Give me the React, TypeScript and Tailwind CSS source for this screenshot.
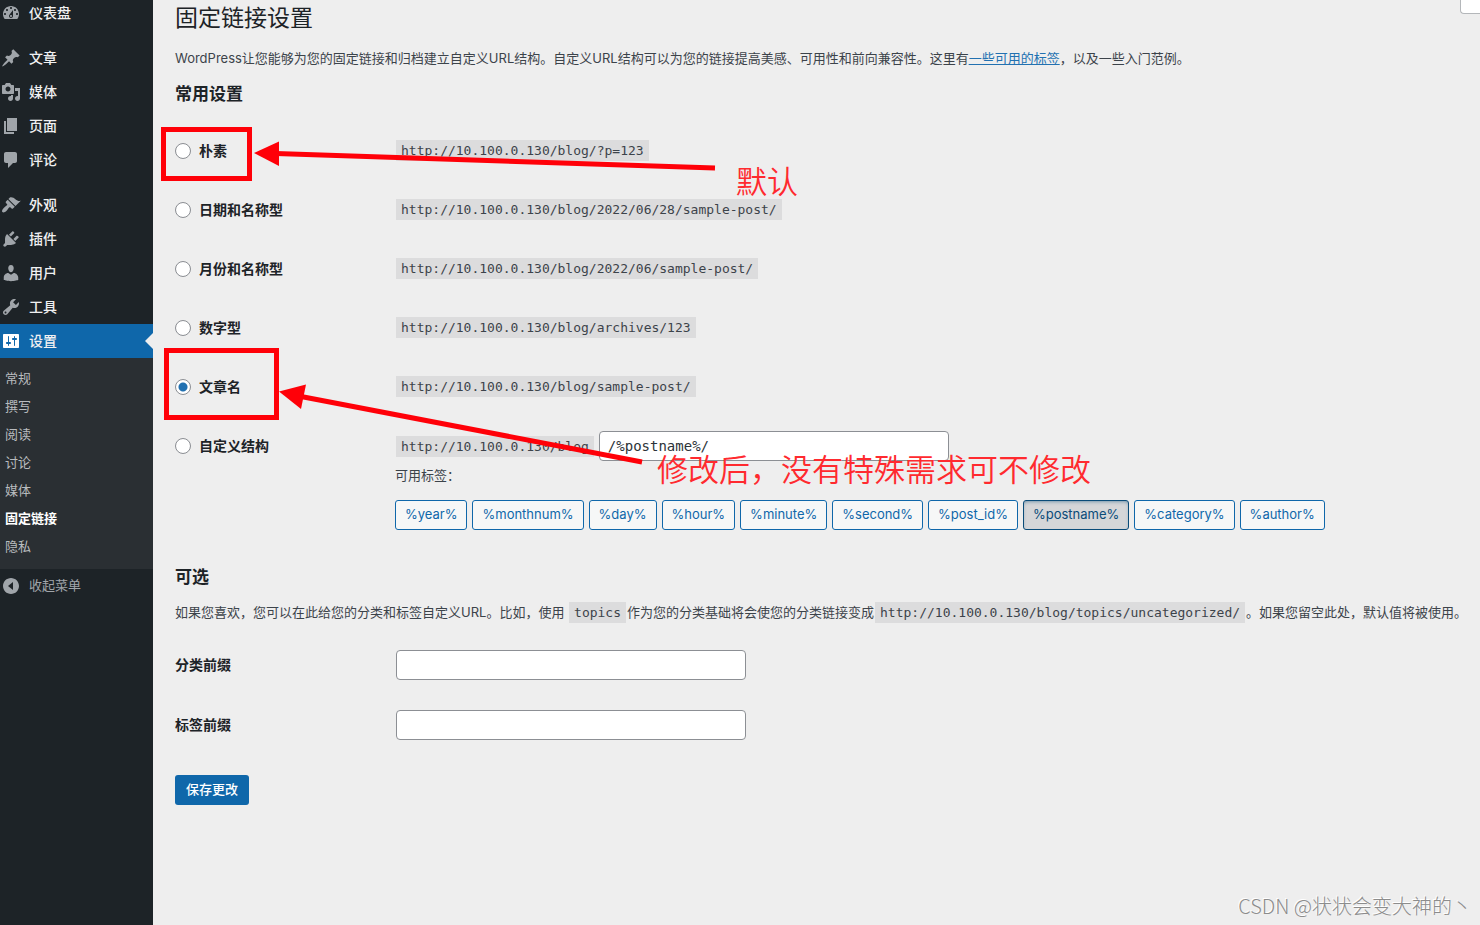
import { useState } from 'react';

interface MenuItem {
  label: string;
  icon: string;
}

const ICONS = {
  dashboard:
    'M3.76 16h12.48c1.1-1.37 1.76-3.11 1.76-5 0-4.42-3.58-8-8-8s-8 3.58-8 8c0 1.89.66 3.63 1.76 5zM10 4c.55 0 1 .45 1 1s-.45 1-1 1-1-.45-1-1 .45-1 1-1zM6 6c.55 0 1 .45 1 1s-.45 1-1 1-1-.45-1-1 .45-1 1-1zm8 0c.55 0 1 .45 1 1s-.45 1-1 1-1-.45-1-1 .45-1 1-1zm-5.37 5.55L12 7v6c0 1.1-.9 2-2 2s-2-.9-2-2c0-.57.24-1.08.63-1.45zM4 10c.55 0 1 .45 1 1s-.45 1-1 1-1-.45-1-1 .45-1 1-1zm12 0c.55 0 1 .45 1 1s-.45 1-1 1-1-.45-1-1 .45-1 1-1zm-5 3c0-.55-.45-1-1-1s-1 .45-1 1 .45 1 1 1 1-.45 1-1z',
  post:
    'M10.44 3.02l1.82-1.82 6.36 6.35-1.83 1.82c-1.05-.68-2.48-.57-3.41.36l-.75.75c-.92.93-1.04 2.35-.35 3.41l-1.83 1.82-2.41-2.41-2.8 2.79c-.42.42-3.38 2.71-3.8 2.29s1.86-3.39 2.28-3.81l2.79-2.79L4.1 9.36l1.83-1.82c1.05.69 2.48.57 3.4-.36l.75-.75c.93-.92 1.05-2.35.36-3.41z',
  media:
    'M13 11V4c0-.55-.45-1-1-1h-1.67L9 1H5L3.67 3H2c-.55 0-1 .45-1 1v7c0 .55.45 1 1 1h10c.55 0 1-.45 1-1zM7 4.5c1.38 0 2.5 1.12 2.5 2.5S8.38 9.5 7 9.5 4.5 8.38 4.5 7 5.62 4.5 7 4.5zM14 6h5v10.5c0 1.38-1.12 2.5-2.5 2.5S14 17.88 14 16.5s1.12-2.5 2.5-2.5c.17 0 .34.02.5.05V9h-3V6zm-4 8.05V13h2v3.5c0 1.38-1.12 2.5-2.5 2.5S7 17.88 7 16.5 8.12 14 9.5 14c.17 0 .34.02.5.05z',
  page: 'M6 15V2h10v13H6zm-1 1h8v2H3V5h2v11z',
  comments:
    'M5 2h9c1.1 0 2 .9 2 2v7c0 1.1-.9 2-2 2h-2l-5 5v-5H5c-1.1 0-2-.9-2-2V4c0-1.1.9-2 2-2z',
  appearance:
    'M14.48 11.06L7.41 3.99l1.5-1.5c.5-.56 2.3-.47 3.51.32 1.21.8 1.43 1.28 2.91 2.1 1.18.64 2.45 1.26 4.45.85zm-.71.71L6.7 4.7 4.93 6.47c-.39.39-.39 1.02 0 1.41l1.06 1.06c.39.39.39 1.03 0 1.42-.6.6-1.43 1.11-2.21 1.69-.35.26-.7.53-1.01.84C1.43 14.23.4 16.08 1.4 17.07c.99 1 2.84-.03 4.18-1.36.31-.31.58-.66.85-1.02.57-.78 1.08-1.61 1.69-2.21.39-.39 1.02-.39 1.41 0l1.06 1.06c.39.39 1.02.39 1.41 0z',
  plugins:
    'M13.11 4.36L9.87 7.6 8 5.73l3.24-3.24c.35-.34 1.05-.2 1.56.32.52.51.66 1.21.31 1.55zm-8 1.77l.91-1.12 9.01 9.01-1.19.84c-.71.71-2.63 1.16-3.82 1.16H6.14L4.9 17.26c-.59.59-1.54.59-2.12 0-.59-.58-.59-1.53 0-2.12l1.24-1.24v-3.88c0-1.13.4-3.19 1.09-3.89zm7.26 3.97l3.24-3.24c.34-.35 1.04-.21 1.55.31.52.51.66 1.21.31 1.55l-3.24 3.25z',
  users:
    'M10 9.25c-2.27 0-2.73-3.44-2.73-3.44C7 4.02 7.82 2 9.97 2c2.16 0 2.98 2.02 2.71 3.81 0 0-.41 3.44-2.68 3.44zm0 2.57L12.72 10c2.39 0 4.52 2.33 4.52 4.53v2.49s-3.65 1.13-7.24 1.13c-3.65 0-7.24-1.13-7.24-1.13v-2.49c0-2.25 1.94-4.48 4.47-4.48z',
  tools:
    'M16.68 9.77c-1.34 1.34-3.3 1.67-4.95.99l-5.41 6.52c-.99.99-2.59.99-3.58 0s-.99-2.59 0-3.57l6.52-5.42c-.68-1.65-.35-3.61.99-4.95 1.28-1.28 3.12-1.62 4.72-1.06l-2.89 2.89 2.82 2.82 2.86-2.87c.53 1.58.18 3.39-1.08 4.65zM3.81 16.21c.4.39 1.04.39 1.43 0 .4-.4.4-1.04 0-1.43-.39-.4-1.03-.4-1.43 0-.39.39-.39 1.03 0 1.43z',
  settings:
    'M18 16V4c0-.55-.45-1-1-1H3c-.55 0-1 .45-1 1v12c0 .55.45 1 1 1h14c.55 0 1-.45 1-1zM8 11h1c.55 0 1 .45 1 1s-.45 1-1 1H8v1.5c0 .28-.22.5-.5.5s-.5-.22-.5-.5V13H6c-.55 0-1-.45-1-1s.45-1 1-1h1V5.5c0-.28.22-.5.5-.5s.5.22.5.5V11zm5-2h-1c-.55 0-1-.45-1-1s.45-1 1-1h1V5.5c0-.28.22-.5.5-.5s.5.22.5.5V7h1c.55 0 1 .45 1 1s-.45 1-1 1h-1v5.5c0 .28-.22.5-.5.5s-.5-.22-.5-.5V9z',
  collapse: 'M10 2c4.42 0 8 3.58 8 8s-3.58 8-8 8-8-3.58-8-8 3.58-8 8-8zm2 12V6l-5 4z',
};

const menuGroups: MenuItem[][] = [
  [{ label: '仪表盘', icon: ICONS.dashboard }],
  [
    { label: '文章', icon: ICONS.post },
    { label: '媒体', icon: ICONS.media },
    { label: '页面', icon: ICONS.page },
    { label: '评论', icon: ICONS.comments },
  ],
  [
    { label: '外观', icon: ICONS.appearance },
    { label: '插件', icon: ICONS.plugins },
    { label: '用户', icon: ICONS.users },
    { label: '工具', icon: ICONS.tools },
    { label: '设置', icon: ICONS.settings },
  ],
];

const settingsPages = ['常规', '撰写', '阅读', '讨论', '媒体', '固定链接', '隐私'];

const structures = [
  { id: 'plain', label: '朴素', example: 'http://10.100.0.130/blog/?p=123' },
  { id: 'day', label: '日期和名称型', example: 'http://10.100.0.130/blog/2022/06/28/sample-post/' },
  { id: 'month', label: '月份和名称型', example: 'http://10.100.0.130/blog/2022/06/sample-post/' },
  { id: 'numeric', label: '数字型', example: 'http://10.100.0.130/blog/archives/123' },
  { id: 'postname', label: '文章名', example: 'http://10.100.0.130/blog/sample-post/' },
];

const tags = ['year', 'monthnum', 'day', 'hour', 'minute', 'second', 'post_id', 'postname', 'category', 'author'];

const MONO = 'font-["DejaVu_Sans_Mono","Noto_Sans_CJK_SC",monospace]';

function MenuIcon({ path }: { path: string }) {
  return (
    <svg viewBox="0 0 20 20" className="h-5 w-5 shrink-0 fill-current" aria-hidden="true">
      <path d={path} fillRule="evenodd" />
    </svg>
  );
}

function Code({ children }: { children: string }) {
  return <code className={`mx-px bg-[#dcdcdd] px-[5px] py-[3px] text-[13px] leading-[15px] ${MONO}`}>{children}</code>;
}

function Sidebar() {
  return (
    <aside className="w-[153px] shrink-0 overflow-hidden bg-[#1d2327]">
      <nav className="-mt-1 flex flex-col gap-[11px]">
        {menuGroups.map((group, i) => (
          <ul key={i}>
            {group.map(({ label, icon }) => {
              const active = label === '设置';
              return (
                <li key={label}>
                  <a
                    href="#"
                    aria-current={active ? 'true' : undefined}
                    className={`relative flex h-[34px] items-center gap-2 pl-px text-sm font-medium ${
                      active ? 'bg-[#0f67aa] text-white' : 'text-[#a0a5aa]'
                    }`}
                  >
                    <MenuIcon path={icon} />
                    <span className="text-[#f0f0f1]">{label}</span>
                    {active && (
                      <span className="absolute right-0 border-y-8 border-r-8 border-y-transparent border-r-[#eeeeee]" />
                    )}
                  </a>
                </li>
              );
            })}
          </ul>
        ))}
      </nav>
      <ul className="bg-[#2a2f33] pt-[7px] pb-2">
        {settingsPages.map((page) => (
          <li key={page}>
            <a
              href="#"
              className={`flex h-7 items-center pl-[5px] text-[13px] ${
                page === '固定链接' ? 'font-bold text-white' : 'text-[#b9bcbf]'
              }`}
            >
              {page}
            </a>
          </li>
        ))}
      </ul>
      <button type="button" className="flex h-[34px] w-full items-center gap-2 pl-px text-[13px] text-[#a0a5aa]">
        <MenuIcon path={ICONS.collapse} />
        收起菜单
      </button>
    </aside>
  );
}

function RadioLabel({ id, label, checked, onSelect }: { id: string; label: string; checked: boolean; onSelect: (id: string) => void }) {
  return (
    <label className="flex w-fit items-center gap-2">
      <input
        type="radio"
        name="structure"
        checked={checked}
        onChange={() => onSelect(id)}
        className="h-4 w-4 appearance-none rounded-full border border-[#8c8f94] bg-white bg-clip-padding checked:bg-[radial-gradient(circle,#2271b1_4px,#ffffff_5px)]"
      />
      {label}
    </label>
  );
}

function Annotations() {
  return (
    <>
      <svg className="pointer-events-none absolute top-0 left-0 h-[500px] w-full" aria-hidden="true">
        <g fill="none" stroke="#ff0008" strokeWidth="5">
          <rect x="163.5" y="129.5" width="86" height="49" />
          <rect x="166.5" y="350.5" width="110" height="67" />
          <path d="M276 153.5L715 168" />
          <path d="M301 396.5L642 462" />
        </g>
        <g fill="#ff0008">
          <path d="M254 153L279 141.500V166z" />
          <path d="M279 391.500L306 384.500L301 409z" />
        </g>
      </svg>
      <span className="absolute top-[159px] left-[736px] text-[31px] leading-[46px] font-[350] text-[#ff2a2f]">默认</span>
      <span className="absolute top-[447px] left-[657px] text-[31px] leading-[46px] font-[350] whitespace-nowrap text-[#ff2a2f]">
        修改后，没有特殊需求可不修改
      </span>
    </>
  );
}

export default function App() {
  const [structure, setStructure] = useState('postname');
  const [custom, setCustom] = useState('/%postname%/');

  const toggleTag = (tag: string) => {
    const part = `%${tag}%/`;
    setCustom(custom.includes(part) ? custom.replace(part, '') : custom + part);
  };

  return (
    <div className='relative flex min-h-screen overflow-hidden bg-[#eeeeee] font-["Inter","Noto_Sans_CJK_SC",sans-serif] text-[13px] text-[#3c434a]'>
      <Sidebar />

      <main className="min-w-0 flex-1 pt-[3px] pl-[22px]">
        <h1 className="text-[23px] leading-[30px] text-[#1d2327]">固定链接设置</h1>
        <p className="mt-[15px] leading-5">
          WordPress让您能够为您的固定链接和归档建立自定义URL结构。自定义URL结构可以为您的链接提高美感、可用性和前向兼容性。这里有
          <a href="#" className="text-[#2271b1] underline">一些可用的标签</a>
          ，以及一些入门范例。
        </p>

        <h2 className="mt-3.5 text-[17px] leading-6 font-semibold text-[#1d2327]">常用设置</h2>
        <table className="mt-[15px] w-full table-fixed text-left">
          <tbody>
            {structures.map(({ id, label, example }) => (
              <tr key={id} className="h-[59px]">
                <th className="w-[220px] text-sm font-semibold text-[#1d2327]">
                  <RadioLabel id={id} label={label} checked={structure === id} onSelect={setStructure} />
                </th>
                <td>
                  <Code>{example}</Code>
                </td>
              </tr>
            ))}
            <tr>
              <th className="pt-5 align-top text-sm font-semibold text-[#1d2327]">
                <RadioLabel id="custom" label="自定义结构" checked={structure === 'custom'} onSelect={setStructure} />
              </th>
              <td className="pt-[15px] align-top">
                <div className="flex items-center gap-1">
                  <Code>http://10.100.0.130/blog</Code>
                  <input
                    type="text"
                    aria-labelledby="available-tags"
                    value={custom}
                    onChange={(e) => setCustom(e.target.value)}
                    className={`h-[30px] w-[350px] rounded border border-[#8c8f94] bg-white px-2 text-sm text-[#2c3338] ${MONO}`}
                  />
                </div>
                <p id="available-tags" className="mt-1 leading-5">可用标签：</p>
                <ul className="mt-[15px] flex flex-wrap gap-[5px]">
                  {tags.map((tag) => (
                    <li key={tag}>
                      <button
                        type="button"
                        onClick={() => toggleTag(tag)}
                        aria-pressed={custom.includes(`%${tag}%`)}
                        className="block h-[30px] rounded-[3px] border border-[#0f67aa] bg-[#f6f7f7] px-[9px] text-[13px] text-[#0f67aa] aria-pressed:border-[#0a4b78] aria-pressed:bg-[#d5d6d8] aria-pressed:text-[#0a4b78] aria-pressed:shadow-[inset_0_2px_5px_-3px_#0a4b78]"
                      >
                        %{tag}%
                      </button>
                    </li>
                  ))}
                </ul>
              </td>
            </tr>
          </tbody>
        </table>

        <h2 className="mt-[35px] text-[17px] leading-6 font-semibold text-[#1d2327]">可选</h2>
        <p className="mt-[13px] leading-5">
          如果您喜欢，您可以在此给您的分类和标签自定义URL。比如，使用 <Code>topics</Code>
          作为您的分类基础将会使您的分类链接变成<Code>http://10.100.0.130/blog/topics/uncategorized/</Code>
          。如果您留空此处，默认值将被使用。
        </p>
        <div className="mt-7 grid grid-cols-[221px_350px] items-center gap-y-[30px]">
          <label htmlFor="category-base" className="text-sm font-semibold text-[#1d2327]">分类前缀</label>
          <input id="category-base" type="text" className="h-[30px] rounded border border-[#8c8f94] bg-white px-2" />
          <label htmlFor="tag-base" className="text-sm font-semibold text-[#1d2327]">标签前缀</label>
          <input id="tag-base" type="text" className="h-[30px] rounded border border-[#8c8f94] bg-white px-2" />
        </div>
        <button type="submit" className="mt-[35px] h-[30px] rounded-[3px] bg-[#0f67aa] px-[11px] text-[13px] font-medium text-white">
          保存更改
        </button>
      </main>

      <Annotations />
      <span className="absolute -top-px right-0 h-[15px] w-5 rounded-bl border border-r-0 border-[#b4b7ba] bg-white" />
      <span className='absolute right-2 bottom-1 font-["Noto_Sans_CJK_SC",sans-serif] text-xl leading-[30px] font-light text-[#8c8c8c] [text-shadow:-1px_-1px_0_#ffffff]'>
        CSDN @状状会变大神的丶
      </span>
    </div>
  );
}
